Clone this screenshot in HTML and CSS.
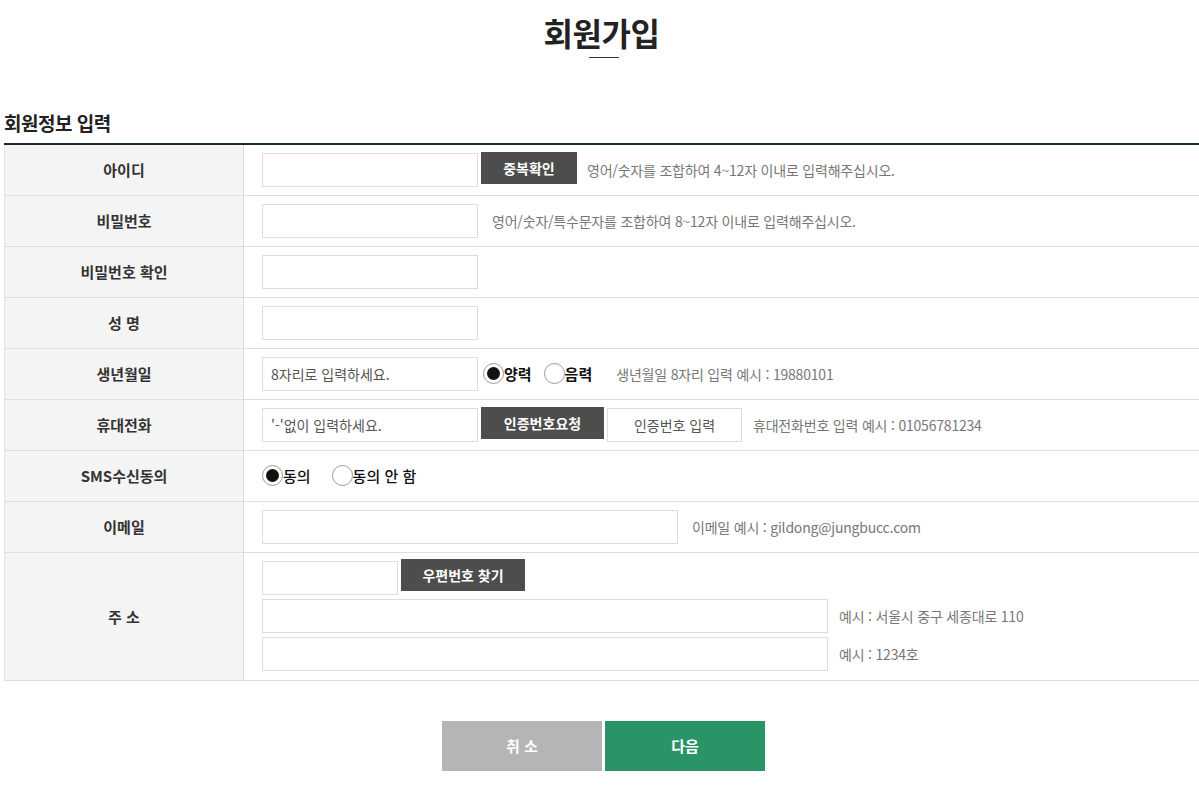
FILE: index.html
```html
<!DOCTYPE html>
<html lang="ko">
<head>
<meta charset="utf-8">
<title>회원가입</title>
<link rel="stylesheet" href="styles.css">
</head>
<body>
<div class="page">
  <h1 class="title">회원가입</h1>
  <div class="title-line"></div>
  <h2 class="section">회원정보 입력</h2>
  <table class="form">
    <tr>
      <th>아이디</th>
      <td><div class="cell">
        <input class="inp w216" type="text">
        <button class="btn w96">중복확인</button>
        <span class="hint">영어/숫자를 조합하여 4~12자 이내로 입력해주십시오.</span>
      </div></td>
    </tr>
    <tr>
      <th>비밀번호</th>
      <td><div class="cell">
        <input class="inp w216" type="password">
        <span class="hint h14">영어/숫자/특수문자를 조합하여 8~12자 이내로 입력해주십시오.</span>
      </div></td>
    </tr>
    <tr>
      <th>비밀번호 확인</th>
      <td><div class="cell"><input class="inp w216" type="password"></div></td>
    </tr>
    <tr>
      <th>성 명</th>
      <td><div class="cell"><input class="inp w216" type="text"></div></td>
    </tr>
    <tr>
      <th>생년월일</th>
      <td><div class="cell">
        <input class="inp w216" type="text" placeholder="8자리로 입력하세요.">
        <span class="radio r-first"><span class="dot on"></span>양력</span>
        <span class="radio r-second"><span class="dot"></span>음력</span>
        <span class="hint h24">생년월일 8자리 입력 예시 : 19880101</span>
      </div></td>
    </tr>
    <tr>
      <th>휴대전화</th>
      <td><div class="cell">
        <input class="inp w216" type="text" placeholder="'-'없이 입력하세요.">
        <button class="btn w123">인증번호요청</button>
        <input class="inp w135 center" type="text" placeholder="인증번호 입력">
        <span class="hint h11">휴대전화번호 입력 예시 : 01056781234</span>
      </div></td>
    </tr>
    <tr>
      <th>SMS수신동의</th>
      <td><div class="cell">
        <span class="radio sms"><span class="dot on"></span>동의</span>
        <span class="radio sms2"><span class="dot"></span>동의 안 함</span>
      </div></td>
    </tr>
    <tr>
      <th>이메일</th>
      <td><div class="cell">
        <input class="inp w416" type="text">
        <span class="hint h14">이메일 예시 : gildong@jungbucc.com</span>
      </div></td>
    </tr>
    <tr class="addr">
      <th>주 소</th>
      <td>
        <div class="addr-list">
          <div class="cell">
            <input class="inp w136" type="text">
            <button class="btn w124 up">우편번호 찾기</button>
          </div>
          <div class="cell">
            <input class="inp w566" type="text">
            <span class="hint h11">예시 : 서울시 중구 세종대로 110</span>
          </div>
          <div class="cell">
            <input class="inp w566" type="text">
            <span class="hint h11">예시 : 1234호</span>
          </div>
        </div>
      </td>
    </tr>
  </table>
  <div class="actions">
    <button class="act cancel">취 소</button>
    <button class="act next">다음</button>
  </div>
</div>
</body>
</html>
```

FILE: styles.css
```css
* { box-sizing: border-box; }
html, body {
  margin: 0;
  padding: 0;
  background: #fff;
}
body {
  font-family: "Noto Sans CJK KR", "Noto Sans", sans-serif;
  color: #333;
}
.page {
  padding: 0 0 0 4px;
}
.title {
  margin: 10px 0 0;
  font-size: 32px;
  font-weight: 700;
  line-height: 44px;
  text-align: center;
  color: #222;
  letter-spacing: -0.5px;
}
.title-line {
  width: 30px;
  height: 1px;
  background: #333;
  margin: 3px auto 0 585px;
}
.section {
  margin: 51px 0 0;
  font-size: 19px;
  font-weight: 700;
  line-height: 28px;
  color: #222;
  letter-spacing: -0.5px;
}
.form {
  width: 100%;
  border-collapse: collapse;
  border-top: 2px solid #13293a;
  margin-top: 6px;
}
.form th {
  width: 239px;
  background: #f4f4f4;
  border-right: 1px solid #ddd;
  border-bottom: 1px solid #ddd;
  border-left: 1px solid #e6e6e6;
  font-size: 15px;
  font-weight: 700;
  color: #333;
  height: 51px;
  padding: 0;
  text-align: center;
}
.form td {
  border-bottom: 1px solid #ddd;
  padding: 0 0 0 18px;
  height: 51px;
}
.cell {
  display: flex;
  align-items: center;
}
.inp {
  height: 34px;
  border: 1px solid #ddd;
  padding: 0 8px;
  font-family: inherit;
  font-size: 14px;
  color: #555;
  background: #fff;
  outline: none;
}
.inp::placeholder { color: #555; }
.inp.center { text-align: center; }
.w216 { width: 216px; }
.w135 { width: 135px; margin-left: 3px; }
.w136 { width: 136px; }
.w416 { width: 416px; }
.w566 { width: 566px; }
.btn {
  height: 32px;
  margin-left: 3px;
  border: 0;
  background: #4d4d4d;
  color: #fff;
  font-family: inherit;
  font-size: 14px;
  font-weight: 700;
  padding: 0;
}
.w96 { width: 96px; }
.w123 { width: 123px; }
.w124 { width: 124px; }
.cell .btn { transform: translateY(-2px); }
.hint {
  font-size: 14px;
  color: #777;
  margin-left: 10px;
  letter-spacing: -0.2px;
}
.h14 { margin-left: 14px; }
.h24 { margin-left: 24px; }
.h11 { margin-left: 11px; }
.radio {
  display: inline-flex;
  align-items: center;
  font-size: 15px;
  font-weight: 700;
  color: #111;
}
.dot {
  width: 21px;
  height: 21px;
  border-radius: 50%;
  border: 1px solid #999;
  background: #fff;
  position: relative;
}
.dot.on::after {
  content: "";
  position: absolute;
  left: 3px;
  top: 3px;
  width: 13px;
  height: 13px;
  border-radius: 50%;
  background: #111;
}
.r-first { margin-left: 5px; }
.r-second { margin-left: 12px; }
.sms { font-weight: 500; }
.sms2 { margin-left: 21px; font-weight: 500; }
.addr th, .addr td { height: 128px; }
.addr-list {
  display: flex;
  flex-direction: column;
  gap: 4px;
  padding: 0;
}
.addr-list .cell .up { transform: translateY(-3px); }
.actions {
  display: flex;
  justify-content: center;
  gap: 3px;
  margin-top: 40px;
  padding-left: 4px;
}
.act {
  width: 160px;
  height: 50px;
  border: 0;
  color: #fff;
  font-family: inherit;
  font-size: 15px;
  font-weight: 700;
}
.cancel { background: #b5b5b5; }
.next { background: #2a9467; }
```
